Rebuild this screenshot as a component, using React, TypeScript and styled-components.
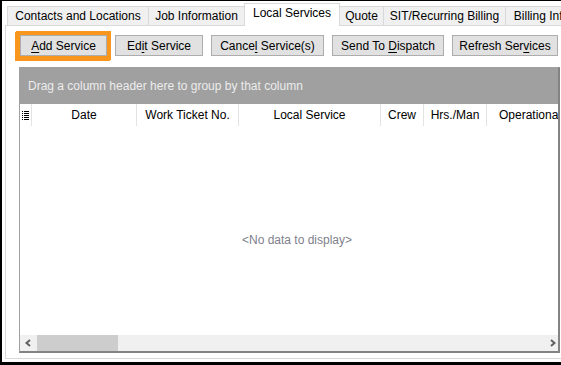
import React from "react";
import styled, { createGlobalStyle } from "styled-components";

const GlobalStyle = createGlobalStyle`
  html, body {
    margin: 0;
    padding: 0;
    background: #ffffff;
  }
  body {
    font-family: "Liberation Sans", Arial, sans-serif;
    font-size: 12px;
    color: #000000;
  }
`;

const Frame = styled.div`
  width: 561px;
  height: 365px;
  box-sizing: border-box;
  border-left: 2px solid #000000;
  border-top: 1px solid #000000;
  border-bottom: 3px solid #000000;
  background: #ffffff;
  overflow: hidden;
`;

const TabStrip = styled.div`
  display: flex;
  align-items: flex-end;
  height: 24px;
  padding-left: 6px;
  white-space: nowrap;
`;

const Tab = styled.div<{ $w: number; $active?: boolean }>`
  position: relative;
  z-index: ${p => (p.$active ? 1 : 0)};
  flex-shrink: 0;
  box-sizing: border-box;
  width: ${p => p.$w}px;
  height: ${p => (p.$active ? 23 : 19)}px;
  margin-left: -1px;
  margin-bottom: ${p => (p.$active ? -1 : 0)}px;
  padding-top: 1px;
  border: 1px solid #d9d9d9;
  border-bottom: none;
  background: ${p => (p.$active ? "#ffffff" : "#f0f0f0")};
  text-align: center;
  line-height: 17px;
`;

const Panel = styled.div`
  margin-left: 3px;
  width: 600px;
  height: 334px;
  box-sizing: border-box;
  border: 1px solid #d9d9d9;
  padding: 9px 0 0 13px;
`;

const Toolbar = styled.div`
  display: flex;
  gap: 8px;
  padding-left: 1px;
  margin-bottom: 11px;
`;

const Button = styled.button<{ $w: number; $focused?: boolean }>`
  flex-shrink: 0;
  width: ${p => p.$w}px;
  height: 21px;
  box-sizing: border-box;
  padding: 1px 0 0;
  border: 1px solid #adadad;
  background: #e1e1e1;
  font-family: "Liberation Sans", Arial, sans-serif;
  font-size: 12px;
  color: #000000;
  white-space: nowrap;
  box-shadow: ${p =>
    p.$focused ? "0 0 0 4px #f8961e, -1px 1px 0 4px #f8961e" : "none"};

  u {
    text-underline-offset: 2px;
  }
`;

const Grid = styled.div`
  width: 541px;
  height: 286px;
  box-sizing: border-box;
  border-left: 1px solid #a0a0a0;
  border-top: 1px solid #a0a0a0;
  border-right: 2px solid #838383;
  border-bottom: 2px solid #838383;
  display: flex;
  flex-direction: column;
  overflow: hidden;
`;

const GroupPanel = styled.div`
  flex-shrink: 0;
  height: 36px;
  background: #a0a0a0;
  color: #ececec;
  padding-left: 8px;
  line-height: 36px;
  white-space: nowrap;
`;

const HeaderRow = styled.div`
  display: flex;
  flex-shrink: 0;
  width: 554px;
  height: 22px;
  background: #ffffff;
`;

const HeaderCell = styled.div<{ $w: number }>`
  flex-shrink: 0;
  width: ${p => p.$w}px;
  box-sizing: border-box;
  border-right: 1px solid #e3e3e3;
  line-height: 22px;
  white-space: nowrap;
  display: flex;
  align-items: center;
  justify-content: center;
`;

const Body = styled.div`
  flex: 1;
  width: 554px;
  box-sizing: border-box;
  padding-top: 18px;
  display: flex;
  align-items: center;
  justify-content: center;
  color: #80808c;
`;

const ScrollBar = styled.div`
  flex-shrink: 0;
  display: flex;
  align-items: stretch;
  height: 16px;
  background: #f0f0f0;
`;

const ScrollArrow = styled.div<{ $right?: boolean }>`
  width: 16px;
  display: flex;
  align-items: center;
  justify-content: ${p => (p.$right ? "flex-end" : "center")};
  padding-right: ${p => (p.$right ? 2 : 0)}px;
  box-sizing: border-box;
`;

const Thumb = styled.div`
  width: 81px;
  margin-left: 1px;
  background: #cdcdcd;
`;

const Spacer = styled.div`
  flex: 1;
`;

const tabs = [
  { label: "Contacts and Locations", w: 142 },
  { label: "Job Information", w: 97 },
  { label: "Local Services", w: 96, active: true },
  { label: "Quote", w: 45 },
  { label: "SIT/Recurring Billing", w: 123 },
  { label: "Billing Information", w: 113 },
];

const columns = [
  { label: "Date", w: 105 },
  { label: "Work Ticket No.", w: 102 },
  { label: "Local Service", w: 142 },
  { label: "Crew", w: 43 },
  { label: "Hrs./Man", w: 63 },
  { label: "Operational", w: 87 },
];

const ColumnsIcon = () => (
  <svg width="7" height="9" viewBox="0 0 7 9">
    {[0, 2, 4, 6, 8].map(y => (
      <g key={y} fill="#000000">
        <rect x="0" y={y} width="1" height="1" />
        <rect x="2" y={y} width="5" height="1" />
      </g>
    ))}
  </svg>
);

const Chevron = ({ right }: { right?: boolean }) => (
  <svg width="6" height="8" viewBox="0 0 6 8">
    <polyline
      points={right ? "1,1 4.5,4 1,7" : "5,1 1.5,4 5,7"}
      fill="none"
      stroke="#606060"
      strokeWidth="2"
    />
  </svg>
);

const App: React.FC = () => {
  return (
    <>
      <GlobalStyle />
      <Frame>
        <TabStrip>
          {tabs.map(t => (
            <Tab key={t.label} $w={t.w} $active={t.active}>
              {t.label}
            </Tab>
          ))}
        </TabStrip>
        <Panel>
          <Toolbar>
            <Button $w={87} $focused>
              <u>A</u>dd Service
            </Button>
            <Button $w={88}>
              Ed<u>i</u>t Service
            </Button>
            <Button $w={113}>
              Cance<u>l</u> Service(s)
            </Button>
            <Button $w={112}>
              Send To <u>D</u>ispatch
            </Button>
            <Button $w={106}>
              Refresh Ser<u>v</u>ices
            </Button>
          </Toolbar>
          <Grid>
            <GroupPanel>Drag a column header here to group by that column</GroupPanel>
            <HeaderRow>
              <HeaderCell $w={12}>
                <ColumnsIcon />
              </HeaderCell>
              {columns.map(c => (
                <HeaderCell key={c.label} $w={c.w}>
                  {c.label}
                </HeaderCell>
              ))}
            </HeaderRow>
            <Body>&lt;No data to display&gt;</Body>
            <ScrollBar>
              <ScrollArrow>
                <Chevron />
              </ScrollArrow>
              <Thumb />
              <Spacer />
              <ScrollArrow $right>
                <Chevron right />
              </ScrollArrow>
            </ScrollBar>
          </Grid>
        </Panel>
      </Frame>
    </>
  );
};

export default App;
